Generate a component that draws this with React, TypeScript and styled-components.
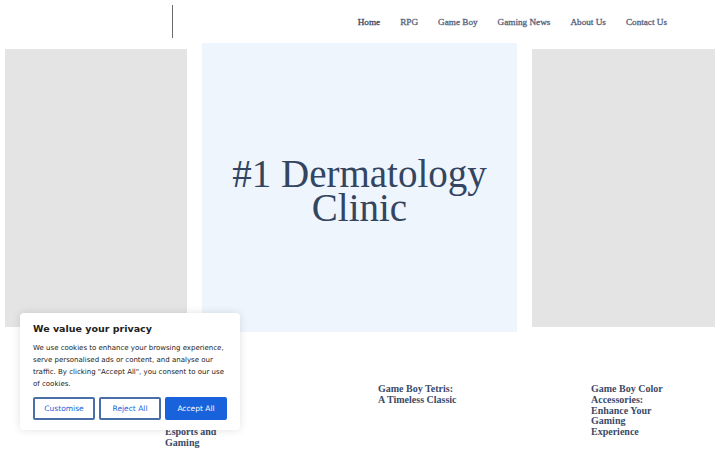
import { FC } from "react";
import styled, { createGlobalStyle } from "styled-components";

const GlobalStyle = createGlobalStyle`
  html, body {
    margin: 0;
    padding: 0;
    background: #ffffff;
  }
  body {
    width: 720px;
    height: 450px;
    overflow: hidden;
    font-family: "Liberation Serif", "DejaVu Serif", serif;
  }
`;

const Page = styled.div`
  position: relative;
  width: 720px;
  height: 450px;
  overflow: hidden;
`;

const Header = styled.header`
  height: 43px;
  display: flex;
  align-items: center;
  justify-content: space-between;
  padding: 0 53px 0 172px;
`;

const LogoRule = styled.div`
  width: 1px;
  height: 33px;
  background: #6b6b6b;
`;

const Nav = styled.nav`
  display: flex;
  gap: 20px;
  margin-top: 1px;
`;

const NavLink = styled.a<{ $active?: boolean }>`
  font-size: 9.2px;
  font-weight: 400;
  -webkit-text-stroke: 0.3px ${(p) => (p.$active ? "#3a4a66" : "#56627a")};
  color: ${(p) => (p.$active ? "#3a4a66" : "#56627a")};
  text-decoration: none;
`;

const Hero = styled.section`
  display: flex;
  align-items: center;
  gap: 15px;
  padding-left: 5px;
  height: 289px;
`;

const SidePanel = styled.div<{ $width: number }>`
  width: ${(p) => p.$width}px;
  height: 278px;
  background: #e4e4e4;
  flex-shrink: 0;
`;

const Feature = styled.div`
  width: 315px;
  height: 289px;
  background: #eff5fd;
  display: flex;
  align-items: center;
  justify-content: center;
  flex-shrink: 0;
`;

const FeatureTitle = styled.h1`
  margin: 0;
  text-align: center;
  font-family: "Liberation Serif", serif;
  font-weight: 400;
  font-size: 39px;
  line-height: 34px;
  color: #334560;
  padding-top: 6px;
`;

const Posts = styled.section`
  display: grid;
  grid-template-columns: repeat(3, 80px);
  column-gap: 133px;
  padding: 52px 0 0 165px;
`;

const PostTitle = styled.h3`
  margin: 0;
  font-family: "Liberation Serif", serif;
  font-size: 10px;
  line-height: 10.8px;
  font-weight: 700;
  color: #3b4a68;
`;

const Cookie = styled.div`
  position: absolute;
  left: 20px;
  top: 313px;
  width: 220px;
  box-sizing: border-box;
  padding: 10px 13px 10px;
  background: #ffffff;
  border-radius: 4px;
  box-shadow: 0 0 8px rgba(0, 0, 0, 0.12);
  font-family: "DejaVu Sans", "Noto Sans", sans-serif;
`;

const CookieTitle = styled.div`
  font-size: 9.5px;
  font-weight: 700;
  color: #212121;
  line-height: 12px;
  margin-bottom: 6px;
`;

const CookieText = styled.p`
  margin: 0 0 8px;
  font-size: 7px;
  line-height: 12px;
  color: #212121;
  position: relative;
  top: 1px;
`;

const Buttons = styled.div`
  display: flex;
  gap: 4px;
`;

const CookieButton = styled.button<{ $primary?: boolean }>`
  flex: 1;
  height: 23px;
  padding: 0;
  font-family: "DejaVu Sans", "Noto Sans", sans-serif;
  font-size: 7.5px;
  border-radius: 2px;
  border: 2px solid ${(p) => (p.$primary ? "#1863dc" : "#4a6ea8")};
  background: ${(p) => (p.$primary ? "#1863dc" : "#ffffff")};
  color: ${(p) => (p.$primary ? "#ffffff" : "#1863dc")};
`;

const navItems = ["Home", "RPG", "Game Boy", "Gaming News", "About Us", "Contact Us"];

const App: FC = () => {
  return (
    <Page>
      <GlobalStyle />
      <Header>
        <LogoRule />
        <Nav>
          {navItems.map((item, i) => (
            <NavLink key={item} href="#" $active={i === 0}>
              {item}
            </NavLink>
          ))}
        </Nav>
      </Header>
      <Hero>
        <SidePanel $width={182} />
        <Feature>
          <FeatureTitle>
            #1 Dermatology
            <br />
            Clinic
          </FeatureTitle>
        </Feature>
        <SidePanel $width={183} />
      </Hero>
      <Posts>
        <PostTitle>Why the Game Boy Still Matters in the World of Competitive Esports and Gaming</PostTitle>
        <PostTitle>Game Boy Tetris: A Timeless Classic</PostTitle>
        <PostTitle>Game Boy Color Accessories: Enhance Your Gaming Experience</PostTitle>
      </Posts>
      <Cookie>
        <CookieTitle>We value your privacy</CookieTitle>
        <CookieText>
          We use cookies to enhance your browsing experience, serve personalised ads or content,
          and analyse our traffic. By clicking "Accept All", you consent to our use of cookies.
        </CookieText>
        <Buttons>
          <CookieButton>Customise</CookieButton>
          <CookieButton>Reject All</CookieButton>
          <CookieButton $primary>Accept All</CookieButton>
        </Buttons>
      </Cookie>
    </Page>
  );
};

export default App;
